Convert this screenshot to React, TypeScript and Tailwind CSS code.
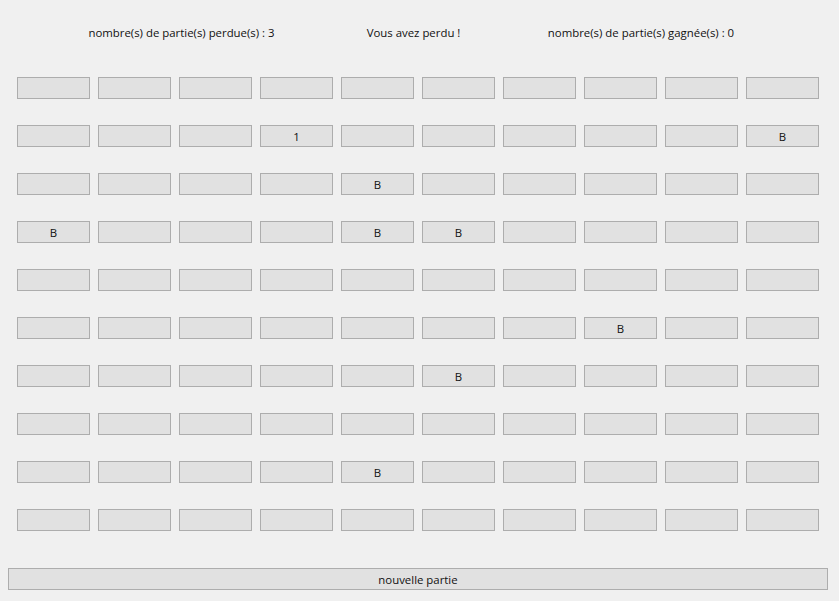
import React from "react";

// contenu des cases révélées : [ligne, colonne] -> texte
const revealed: Record<string, string> = {
  "1-3": "1",
  "1-9": "B",
  "2-4": "B",
  "3-0": "B",
  "3-4": "B",
  "3-5": "B",
  "5-7": "B",
  "6-5": "B",
  "8-4": "B",
};

const rows = Array.from({ length: 10 }, (_, i) => i);
const cols = Array.from({ length: 10 }, (_, i) => i);

export default function App() {
  return (
    <div
      className="w-[839px] h-[601px] bg-[#f0f0f0] text-[11.4px] text-[#111] flex flex-col"
      style={{ fontFamily: '"Open Sans", "Noto Sans", sans-serif' }}
    >
      {/* en-tête */}
      <div className="flex pt-[25px] leading-4">
        <div className="w-[65px]" />
        <div className="w-[233px] text-center">nombre(s) de partie(s) perdue(s) : 3</div>
        <div className="w-[231px] text-center">Vous avez perdu !</div>
        <div className="w-[224px] text-center">nombre(s) de partie(s) gagnée(s) : 0</div>
      </div>

      {/* grille */}
      <div className="grid grid-cols-[repeat(10,73px)] gap-x-[8px] gap-y-[26px] mt-[36px] ml-[17px]">
        {rows.map((r) =>
          cols.map((c) => (
            <button
              key={`${r}-${c}`}
              className="h-[22px] pt-[2px] bg-[#e1e1e1] border border-[#adadad] flex items-center justify-center leading-none"
            >
              {revealed[`${r}-${c}`] ?? ""}
            </button>
          ))
        )}
      </div>

      <button className="mt-[37px] ml-[8px] w-[820px] h-[22px] pt-[2px] bg-[#e1e1e1] border border-[#adadad] flex items-center justify-center leading-none">
        nouvelle partie
      </button>
    </div>
  );
}
